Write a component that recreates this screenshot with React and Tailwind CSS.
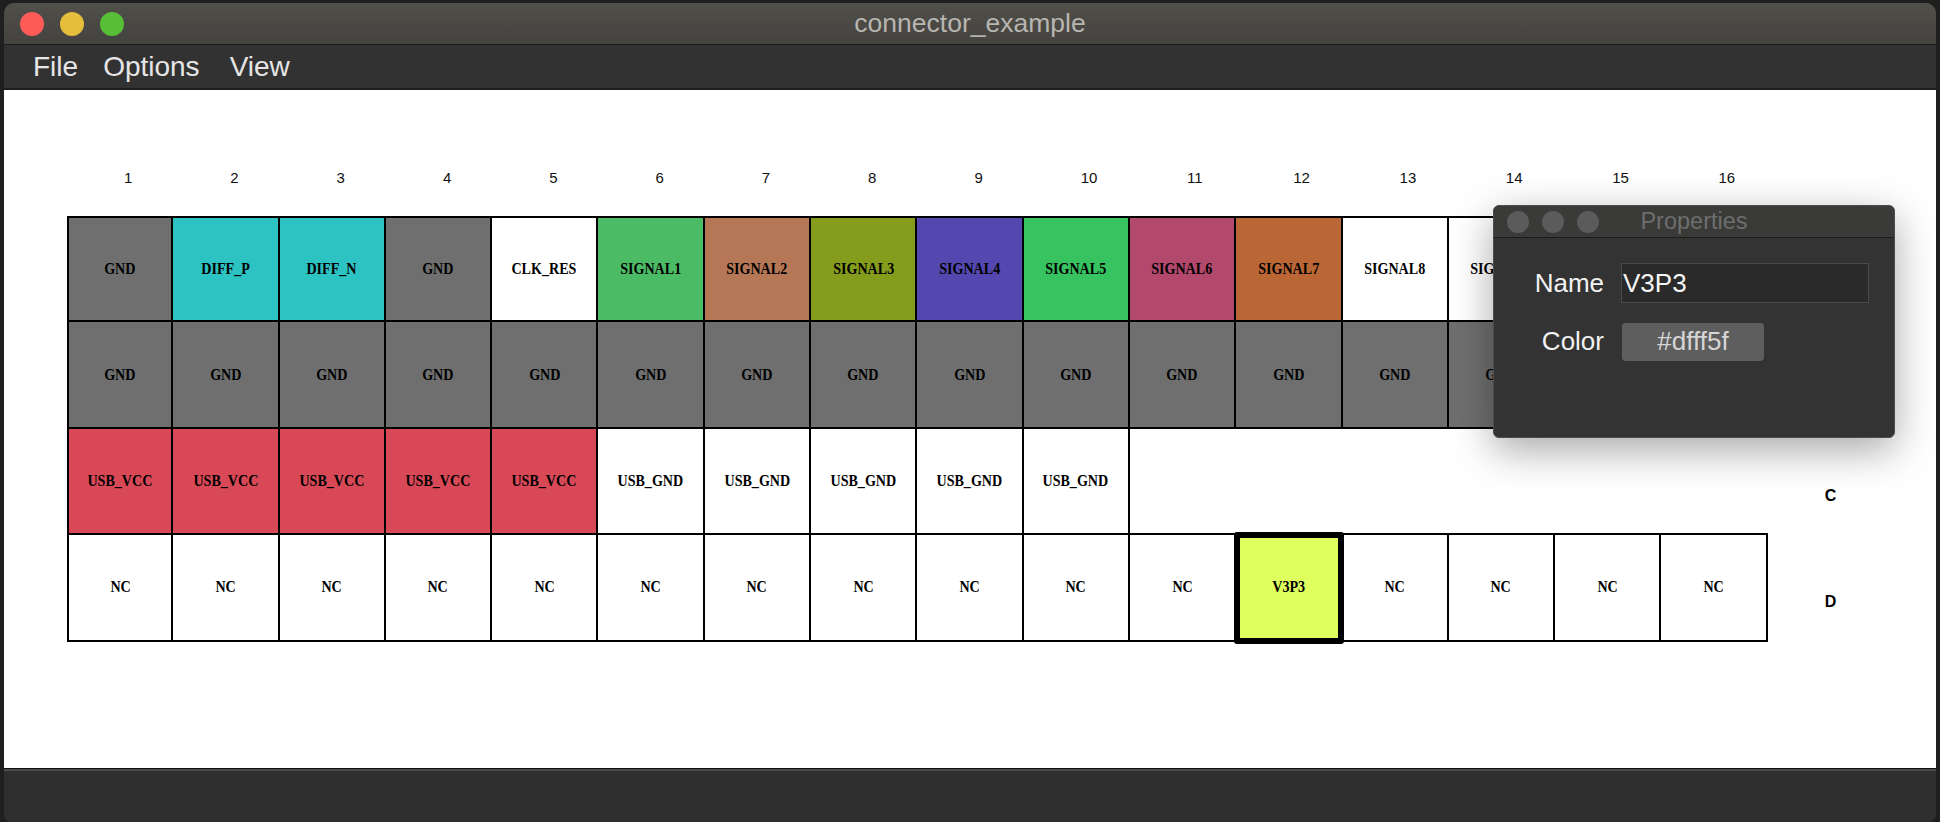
import React from 'react';

const GRAY = 'bg-[#6f6f6f]';
const WHITE = 'bg-white';

const rows = [
  {
    label: 'A',
    pins: [
      ['GND', GRAY],
      ['DIFF_P', 'bg-[#2dc3c3]'],
      ['DIFF_N', 'bg-[#2dc3c3]'],
      ['GND', GRAY],
      ['CLK_RES', WHITE],
      ['SIGNAL1', 'bg-[#4cbb66]'],
      ['SIGNAL2', 'bg-[#b67757]'],
      ['SIGNAL3', 'bg-[#869c1d]'],
      ['SIGNAL4', 'bg-[#5448b0]'],
      ['SIGNAL5', 'bg-[#37c360]'],
      ['SIGNAL6', 'bg-[#b2486c]'],
      ['SIGNAL7', 'bg-[#bb6735]'],
      ['SIGNAL8', WHITE],
      ['SIGNAL9', WHITE],
      ['SIGNAL10', WHITE],
      ['SIGNAL11', WHITE],
    ],
  },
  { label: 'B', pins: Array.from({ length: 16 }, () => ['GND', GRAY]) },
  {
    label: 'C',
    pins: [
      ...Array.from({ length: 5 }, () => ['USB_VCC', 'bg-[#d84857]']),
      ...Array.from({ length: 5 }, () => ['USB_GND', WHITE]),
    ],
  },
  {
    label: 'D',
    pins: Array.from({ length: 16 }, (_, i) =>
      i === 11 ? ['V3P3', 'bg-[#dfff5f]', true] : ['NC', WHITE]
    ),
  },
];

const uiFont = { fontFamily: '"Liberation Sans", Arial, sans-serif' };
const pinFont = { fontFamily: '"Liberation Serif", "Times New Roman", serif' };

function PinCell({ pin, first, top }) {
  const [name, color, selected] = pin;
  // top: 'first' = first row, 'open' = nothing above (draw own top line, pulled up onto the line of the row above)
  let sizing = 'h-[106.4px]';
  if (top === 'first') sizing = 'h-[106.4px] border-t-2';
  if (top === 'open') sizing = 'h-[108.4px] -mt-[2px] border-t-2';
  return (
    <div
      className={
        'relative shrink-0 w-[106.3px] flex items-center justify-center border-black border-r-2 border-b-2 ' +
        sizing +
        ' ' +
        color +
        (first ? ' border-l-2' : '')
      }
    >
      <span
        className="inline-block text-[16px] font-bold text-black scale-x-[0.88] leading-none whitespace-nowrap"
        style={pinFont}
      >
        {name}
      </span>
      {selected && (
        <div className="absolute -left-[2px] -right-[3px] -top-[3px] -bottom-[4px] border-[6px] border-black rounded-[3px] z-10" />
      )}
    </div>
  );
}

function ConnectorGrid() {
  return (
    <div className="flex flex-col">
      {rows.map((row, r) => (
        <div key={row.label} className="flex items-start h-[106.4px]">
          {Array.from({ length: 16 }, (_, i) => {
            const pin = row.pins[i];
            if (!pin) return <div key={i} className="shrink-0 w-[106.3px] h-[106.4px]" />;
            const top = r === 0 ? 'first' : !rows[r - 1].pins[i] ? 'open' : 'shared';
            return <PinCell key={i} pin={pin} first={i === 0} top={top} />;
          })}
          <div
            className="shrink-0 w-[106.3px] pl-[57px] pt-[59px] text-[16px] leading-[16px] font-bold text-black"
            style={uiFont}
          >
            {row.label}
          </div>
        </div>
      ))}
    </div>
  );
}

function PropertiesDialog() {
  return (
    <div
      className="absolute left-[1493px] top-[205px] w-[402px] h-[233px] rounded-[6px] border border-[#4c4c4c] bg-[#333333] shadow-[0_12px_40px_rgba(0,0,0,0.35)] flex flex-col overflow-hidden z-20"
      style={uiFont}
    >
      <div className="relative h-[32px] bg-[#3a3a38] border-b border-[#1c1c1c] flex items-center pl-[13px] gap-[13px]">
        <div className="w-[22px] h-[22px] rounded-full bg-[#5b5b5b]" />
        <div className="w-[22px] h-[22px] rounded-full bg-[#5b5b5b]" />
        <div className="w-[22px] h-[22px] rounded-full bg-[#5b5b5b]" />
        <div className="absolute inset-0 flex items-center justify-center text-[23.5px] text-[#6e6e6e]">
          Properties
        </div>
      </div>
      <div className="flex flex-col pt-[25px] gap-[19px]">
        <div className="flex items-center">
          <div className="w-[110px] text-right text-[26px] text-[#f2f2f2]">Name</div>
          <div className="ml-[17px] w-[248px] h-[40px] bg-[#2a2a2a] border border-[#4a4a4a] flex items-center pl-[1px] text-[26px] text-[#f4f4f4]">
            V3P3
          </div>
        </div>
        <div className="flex items-center">
          <div className="w-[110px] text-right text-[26px] text-[#f2f2f2]">Color</div>
          <div className="ml-[18px] w-[142px] h-[38px] rounded-[4px] bg-[#5e5e5e] flex items-center justify-center text-[26px] text-[#d6d6d6]">
            #dfff5f
          </div>
        </div>
      </div>
    </div>
  );
}

export default function App() {
  return (
    <div className="relative w-[1940px] h-[822px] bg-[#1f1f1f] overflow-hidden" style={uiFont}>
      <div className="ml-[4px] mt-[3px] w-[1932px] h-[819px] rounded-t-[10px] rounded-b-[8px] overflow-hidden flex flex-col bg-[#2f2f2f]">
        {/* title bar */}
        <div className="relative h-[42px] bg-gradient-to-b from-[#514f4a] to-[#45433f] border-b border-[#1c1c1c] flex items-center pl-[16px] gap-[16px]">
          <div className="w-[24px] h-[24px] rounded-full bg-[#fc5b57]" />
          <div className="w-[24px] h-[24px] rounded-full bg-[#e5bf3c]" />
          <div className="w-[24px] h-[24px] rounded-full bg-[#57c038]" />
          <div className="absolute inset-0 flex items-center justify-center text-[26.5px] text-[#b7b5b0]">
            connector_example
          </div>
        </div>
        {/* menu bar */}
        <div className="h-[45px] bg-[#323232] border-b-2 border-[#1e1e1e] flex items-center pl-[29px] text-[28px] text-[#e6e6e6]">
          <span>File</span>
          <span className="ml-[25px]">Options</span>
          <span className="ml-[30px]">View</span>
        </div>
        {/* canvas */}
        <div className="flex-1 bg-white pl-[63px]">
          <div className="flex pt-[78px] h-[98px] text-[15px] leading-[20px] text-[#111]">
            {Array.from({ length: 16 }, (_, i) => (
              <div key={i} className="shrink-0 w-[106.3px] pl-[57px]">
                {i + 1}
              </div>
            ))}
          </div>
          <div className="mt-[28px]">
            <ConnectorGrid />
          </div>
        </div>
        {/* status bar */}
        <div className="h-[54px] border-t border-[#111] bg-[#2f2f2f]">
          <div className="h-[2px] bg-[#4b4b4b]" />
        </div>
      </div>
      <PropertiesDialog />
    </div>
  );
}
